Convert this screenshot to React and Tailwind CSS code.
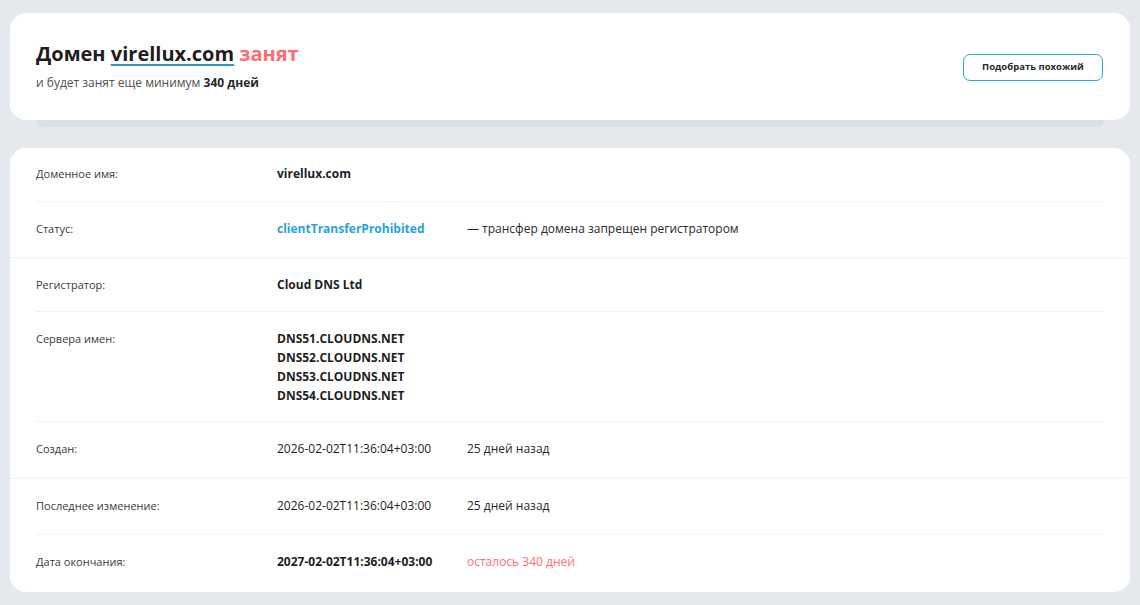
import React from "react";

const Label = ({ children }) => (
  <div className="w-[241px] shrink-0 text-[11px] leading-[19px] text-[#3a3a3a]">{children}</div>
);

function Row({ label, children, pad, border }) {
  return (
    <div className="px-[26px]">
      <div className={"flex items-start " + pad + (border ? " border-b border-[#f2f3f5]" : "")}>
        <Label>{label}</Label>
        <div className="flex-1 flex items-start">{children}</div>
      </div>
    </div>
  );
}

function Group({ rows, last }) {
  return (
    <div className={last ? "" : "border-b border-[#f0f1f3]"}>
      {rows.map((r, i) => (
        <Row key={i} label={r.label} pad={r.pad} border={i !== rows.length - 1}>
          {r.content}
        </Row>
      ))}
    </div>
  );
}

const Val = ({ children, className = "" }) => (
  <div className={"w-[190px] shrink-0 text-[12px] leading-[19px] text-[#1e1e1e] " + className}>{children}</div>
);

const Note = ({ children, className = "text-[#2a2a2a]" }) => (
  <div className={"text-[12px] leading-[19px] " + className}>{children}</div>
);

export default function App() {
  const g1 = [
    { label: "Доменное имя:", pad: "pt-[16px] pb-[18px]", content: <Val className="font-bold">virellux.com</Val> },
    {
      label: "Статус:",
      pad: "pt-[17px] pb-[19px]",
      content: (
        <>
          <Val className="font-bold !text-[#27a3d9]">clientTransferProhibited</Val>
          <Note>— трансфер домена запрещен регистратором</Note>
        </>
      ),
    },
  ];
  const g2 = [
    { label: "Регистратор:", pad: "pt-[17px] pb-[17px]", content: <Val className="font-bold">Cloud DNS Ltd</Val> },
    {
      label: "Сервера имен:",
      pad: "pt-[17px] pb-[16px]",
      content: (
        <Val className="font-bold">
          <div>DNS51.CLOUDNS.NET</div>
          <div>DNS52.CLOUDNS.NET</div>
          <div>DNS53.CLOUDNS.NET</div>
          <div>DNS54.CLOUDNS.NET</div>
        </Val>
      ),
    },
    {
      label: "Создан:",
      pad: "pt-[17px] pb-[20px]",
      content: (
        <>
          <Val>2026-02-02T11:36:04+03:00</Val>
          <Note>25 дней назад</Note>
        </>
      ),
    },
  ];
  const g3 = [
    {
      label: "Последнее изменение:",
      pad: "pt-[17px] pb-[19px]",
      content: (
        <>
          <Val>2026-02-02T11:36:04+03:00</Val>
          <Note>25 дней назад</Note>
        </>
      ),
    },
    {
      label: "Дата окончания:",
      pad: "pt-[17px] pb-[21px]",
      content: (
        <>
          <Val className="font-bold">2027-02-02T11:36:04+03:00</Val>
          <Note className="text-[#ff6f6f]">осталось 340 дней</Note>
        </>
      ),
    },
  ];

  return (
    <div
      className="min-h-[605px] w-[1140px] bg-[#e5e9ed] px-[10px] pt-[13px] pb-[13px]"
      style={{ fontFamily: '"Open Sans", "Noto Sans", sans-serif' }}
    >
      <div>
        <div className="relative z-10 flex h-[107px] items-center justify-between rounded-[16px] bg-white pl-[26px] pr-[27px]">
          <div className="-mt-[3px]">
            <div className="text-[20px] font-bold leading-[28px] text-[#1e1e1e]">
              Домен{" "}
              <span className="underline decoration-[#2f93cc] decoration-[1.5px] underline-offset-[3px]">virellux.com</span>{" "}
              <span className="text-[#ff6b6f]">занят</span>
            </div>
            <div className="mt-[6px] text-[12px] leading-[17px] text-[#505050]">
              и будет занят еще минимум <span className="font-bold text-[#2a2a2a]">340 дней</span>
            </div>
          </div>
          <button className="mt-[2px] h-[27px] w-[140px] rounded-[7px] border border-[#25a6dc] bg-white text-[9.5px] font-bold text-[#2a2a2a]">
            Подобрать похожий
          </button>
        </div>
        <div className="mx-[26px] h-[7px] rounded-b-[6px] bg-[#dbe0e6]" />
      </div>

      <div className="mt-[21px] overflow-hidden rounded-[16px] bg-white">
        <Group rows={g1} />
        <Group rows={g2} />
        <Group rows={g3} last />
      </div>
    </div>
  );
}
